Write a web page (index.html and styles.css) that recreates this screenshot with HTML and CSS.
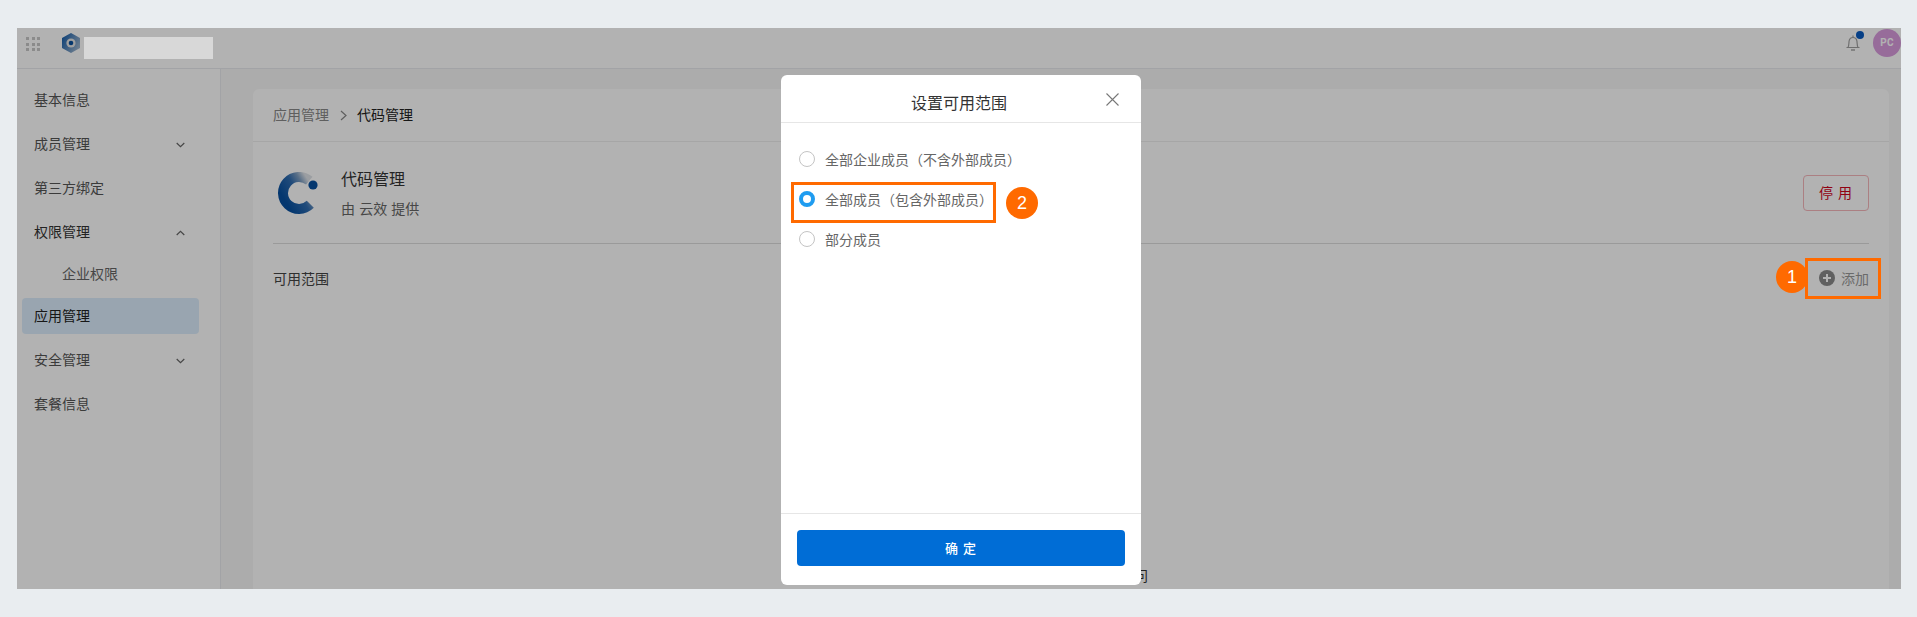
FILE: index.html
```html
<!DOCTYPE html>
<html lang="zh">
<head>
<meta charset="utf-8">
<title>设置可用范围</title>
<link rel="stylesheet" href="styles.css">
</head>
<body>
<div class="app">
  <header class="topbar">
    <div class="grid-icon"><i></i><i></i><i></i><i></i><i></i><i></i><i></i><i></i><i></i></div>
    <svg class="hex-logo" width="18" height="20" viewBox="0 0 18 20">
      <defs><linearGradient id="hg" x1="0" y1="0" x2="1" y2="0.6"><stop offset="0" stop-color="#0a56a8"/><stop offset="1" stop-color="#9db4cc"/></linearGradient></defs>
      <path d="M9 0 L18 5 V15 L9 20 L0 15 V5 Z" fill="url(#hg)"/>
      <circle cx="9" cy="10" r="4.6" fill="#e4e4e4"/>
      <circle cx="9" cy="10" r="2.3" fill="#0a4f9c"/>
    </svg>
    <div class="name-mask"></div>
    <div class="top-right">
      <div class="bell">
        <svg width="14" height="16" viewBox="0 0 14 16" fill="none" stroke="#a0a0a0" stroke-width="1.2">
          <path d="M.5 12.5 H13.5 M2 12.5 C3 10.5 2.8 8 3.1 6 C3.5 3.6 5.2 2.5 7 2.5 C8.8 2.5 10.5 3.6 10.9 6 C11.2 8 11 10.5 12 12.5"/>
          <path d="M5 15 H9" stroke-width="1.4"/>
          <path d="M7 .5 V2.5"/>
        </svg>
        <span class="bell-dot"></span>
      </div>
      <div class="avatar">PC</div>
    </div>
  </header>
  <div class="main">
    <nav class="sidebar">
      <div class="nav-item">基本信息</div>
      <div class="nav-item">成员管理<svg class="chev" width="9" height="6" viewBox="0 0 9 6"><path d="M.7 1 L4.5 4.6 L8.3 1"/></svg></div>
      <div class="nav-item">第三方绑定</div>
      <div class="nav-item nav-open">权限管理<svg class="chev" width="9" height="6" viewBox="0 0 9 6"><path d="M.7 5 L4.5 1.4 L8.3 5"/></svg></div>
      <div class="nav-sub">企业权限</div>
      <div class="nav-active">应用管理</div>
      <div class="nav-item">安全管理<svg class="chev" width="9" height="6" viewBox="0 0 9 6"><path d="M.7 1 L4.5 4.6 L8.3 1"/></svg></div>
      <div class="nav-item">套餐信息</div>
    </nav>
    <section class="content">
      <div class="card">
        <div class="crumbs">
          <span class="crumb-link">应用管理</span>
          <svg class="crumb-sep" width="7" height="11" viewBox="0 0 7 11"><path d="M1 1 L6 5.5 L1 10"/></svg>
          <span class="crumb-current">代码管理</span>
        </div>
        <div class="card-body">
          <div class="app-head">
            <svg class="app-logo" width="40" height="42" viewBox="0 0 40 42">
              <defs><linearGradient id="cg" x1="0" y1="0.62" x2="0.85" y2="0"><stop offset="0" stop-color="#0750a0"/><stop offset=".5" stop-color="#2f6cb0"/><stop offset=".78" stop-color="#7f9fc2"/><stop offset="1" stop-color="#dfe3e8"/></linearGradient></defs>
              <path d="M31.3 8.7 A16 16 0 1 0 32.3 32.3" fill="none" stroke="url(#cg)" stroke-width="10"/>
              <circle cx="35" cy="13" r="4.6" fill="#0750a0"/>
            </svg>
            <div class="app-info">
              <div class="app-name">代码管理</div>
              <div class="app-by">由 云效 提供</div>
            </div>
            <div class="stop-btn">停 用</div>
          </div>
          <div class="scope-row">
            <span class="scope-label">可用范围</span>
            <span class="add-btn"><span class="add-icon"></span>添加</span>
          </div>
          <div class="empty-text">暂无成员，全员不可访问</div>
        </div>
      </div>
    </section>
  </div>
  <div class="overlay"></div>
  <div class="name-cover"></div>
  <div class="callout callout-add"></div>
  <div class="badge badge-one">1</div>
  <div class="modal">
    <div class="modal-head">设置可用范围
      <svg class="modal-close" width="13" height="13" viewBox="0 0 13 13"><path d="M.5 .5 L12.5 12.5 M12.5 .5 L.5 12.5"/></svg>
    </div>
    <div class="modal-body">
      <label class="radio-row"><span class="radio"></span>全部企业成员（不含外部成员）</label>
      <label class="radio-row"><span class="radio radio-on"></span>全部成员（包含外部成员）</label>
      <label class="radio-row"><span class="radio"></span>部分成员</label>
      <div class="callout callout-radio"></div>
      <div class="badge badge-two">2</div>
    </div>
    <div class="modal-foot"><div class="ok-btn">确 定</div></div>
  </div>
</div>
</body>
</html>
```
FILE: styles.css
```css
* { box-sizing: border-box; }
html, body { height: 100%; }
body {
  margin: 0;
  padding: 28px 16px 28px 17px;
  background: #e9edf0;
  font-family: "Noto Sans CJK SC", "Liberation Sans", sans-serif;
  font-size: 14px;
  color: #333;
  overflow: hidden;
}
.app {
  position: relative;
  height: 561px;
  background: #f6f6f6;
  display: flex;
  flex-direction: column;
  overflow: hidden;
}
.topbar {
  height: 41px;
  flex: none;
  display: flex;
  align-items: flex-start;
  background: #fff;
  border-bottom: 1px solid #e8eaee;
}
.grid-icon {
  margin: 9px 0 0 9px;
  width: 14px;
  height: 14px;
  display: grid;
  grid-template-columns: repeat(3, 3px);
  grid-template-rows: repeat(3, 3px);
  gap: 2.5px;
}
.grid-icon i { background: #c8c8c8; }
.hex-logo { margin: 5px 0 0 22px; }
.name-mask { margin: 9px 0 0 4px; width: 129px; height: 22px; }
.name-cover {
  position: absolute;
  left: 67px;
  top: 9px;
  width: 129px;
  height: 22px;
  background: #d8d8d8;
}
.top-right { margin-left: auto; display: flex; align-items: flex-start; }
.bell { position: relative; width: 14px; height: 16px; margin: 7px 13px 0 0; }
.bell svg { display: block; }
.bell-dot {
  position: absolute;
  top: -4px;
  right: -4px;
  width: 8px;
  height: 8px;
  border-radius: 50%;
  background: #0a5bc0;
}
.avatar {
  width: 28px;
  height: 28px;
  margin-top: 1px;
  border-radius: 50%;
  background: #d89bdd;
  color: #fff;
  font: bold 10px/28px "Roboto", sans-serif;
  text-align: center;
  letter-spacing: .3px;
}
.main { flex: 1; display: flex; min-height: 0; }
.sidebar {
  width: 204px;
  flex: none;
  padding: 9px 21px 0 5px;
  background: #fff;
  border-right: 1px solid #e8eaee;
  color: #555;
}
.nav-item {
  height: 44px;
  padding: 0 0 2px 12px;
  display: flex;
  align-items: center;
  justify-content: space-between;
}
.nav-open { color: #333; }
.chev { margin: 4px 14px 0 0; fill: none; stroke: #666; stroke-width: 1.2; }
.nav-sub { height: 40px; line-height: 38px; padding-left: 40px; color: #666; }
.nav-active {
  height: 36px;
  margin: 4px 0;
  line-height: 34px;
  padding-left: 12px;
  border-radius: 4px;
  background: #dcedfc;
  color: #222;
}
.content { flex: 1; min-width: 0; padding: 20px 12px 0 32px; }
.card { height: 100%; background: #fff; border-radius: 6px 6px 0 0; }
.crumbs {
  height: 53px;
  padding: 0 20px 2px;
  display: flex;
  align-items: center;
  border-bottom: 1px solid #eee;
}
.crumb-link { color: #888; }
.crumb-sep { margin: 2px 10px 0 11px; fill: none; stroke: #888; stroke-width: 1.2; }
.crumb-current { color: #222; }
.card-body { padding: 0 20px; }
.app-head {
  height: 102px;
  display: flex;
  align-items: flex-start;
  border-bottom: 1px solid #ddd;
}
.app-logo { margin: 30px 0 0 5px; }
.app-info { margin-left: 23px; }
.app-name { margin-top: 24px; font-size: 16px; line-height: 24px; color: #333; }
.app-by { margin-top: 8px; line-height: 20px; color: #666; word-spacing: 1px; }
.stop-btn {
  margin: 33px 0 0 auto;
  width: 66px;
  height: 36px;
  line-height: 33px;
  text-align: center;
  border: 1px solid #f5b6bb;
  border-radius: 4px;
  color: #d0021b;
  font-size: 14px;
  letter-spacing: 1px;
}
.scope-row {
  height: 67px;
  display: flex;
  align-items: center;
  justify-content: space-between;
}
.scope-label { color: #444; }
.add-btn { display: flex; align-items: center; color: #999; }
.add-icon {
  position: relative;
  width: 16px;
  height: 16px;
  margin-right: 6px;
  border-radius: 50%;
  background: #8a8a8a;
}
.add-icon::before, .add-icon::after {
  content: "";
  position: absolute;
  background: #fff;
}
.add-icon::before { left: 4px; right: 4px; top: 7px; height: 2px; }
.add-icon::after { top: 4px; bottom: 4px; left: 7px; width: 2px; }
.empty-text { margin-top: 254px; text-align: center; color: #333; line-height: 20px; }
.overlay {
  position: absolute;
  inset: 0;
  background: rgba(0, 0, 0, .3);
}
.callout {
  position: absolute;
  border: 3px solid #ff6a00;
}
.callout-add { left: 1788px; top: 230px; width: 76px; height: 41px; }
.callout-radio { left: 10px; top: 59px; width: 205px; height: 41px; }
.badge {
  position: absolute;
  width: 32px;
  height: 32px;
  border-radius: 50%;
  background: #ff6a00;
  color: #fff;
  font: 18px/32px "Liberation Sans", sans-serif;
  text-align: center;
}
.badge-one { left: 1759px; top: 233px; }
.badge-two { left: 225px; top: 64px; }
.modal {
  position: absolute;
  left: 764px;
  top: 47px;
  width: 360px;
  height: 510px;
  display: flex;
  flex-direction: column;
  background: #fff;
  border-radius: 6px;
}
.modal-head {
  position: relative;
  height: 48px;
  flex: none;
  padding-right: 4px;
  border-bottom: 1px solid #e6e6e6;
  text-align: center;
  font-size: 16px;
  line-height: 55px;
  color: #333;
}
.modal-close {
  position: absolute;
  right: 22px;
  top: 18px;
  fill: none;
  stroke: #777;
  stroke-width: 1.1;
}
.modal-body { position: relative; flex: 1; padding: 16px 18px 0; }
.radio-row {
  height: 40px;
  display: flex;
  align-items: center;
  color: #666;
}
.radio {
  width: 16px;
  height: 16px;
  margin-right: 10px;
  border: 1px solid #c4c4c4;
  border-radius: 50%;
  background: #fff;
}
.radio-on { border: 4.5px solid #1f9cf0; }
.modal-foot {
  flex: none;
  height: 72px;
  padding: 16px 16px 0;
  border-top: 1px solid #e6e6e6;
}
.ok-btn {
  height: 36px;
  line-height: 35px;
  text-align: center;
  border-radius: 4px;
  background: #006dd6;
  color: #fff;
  font-weight: 500;
  font-size: 13px;
  letter-spacing: 1px;
}
```
